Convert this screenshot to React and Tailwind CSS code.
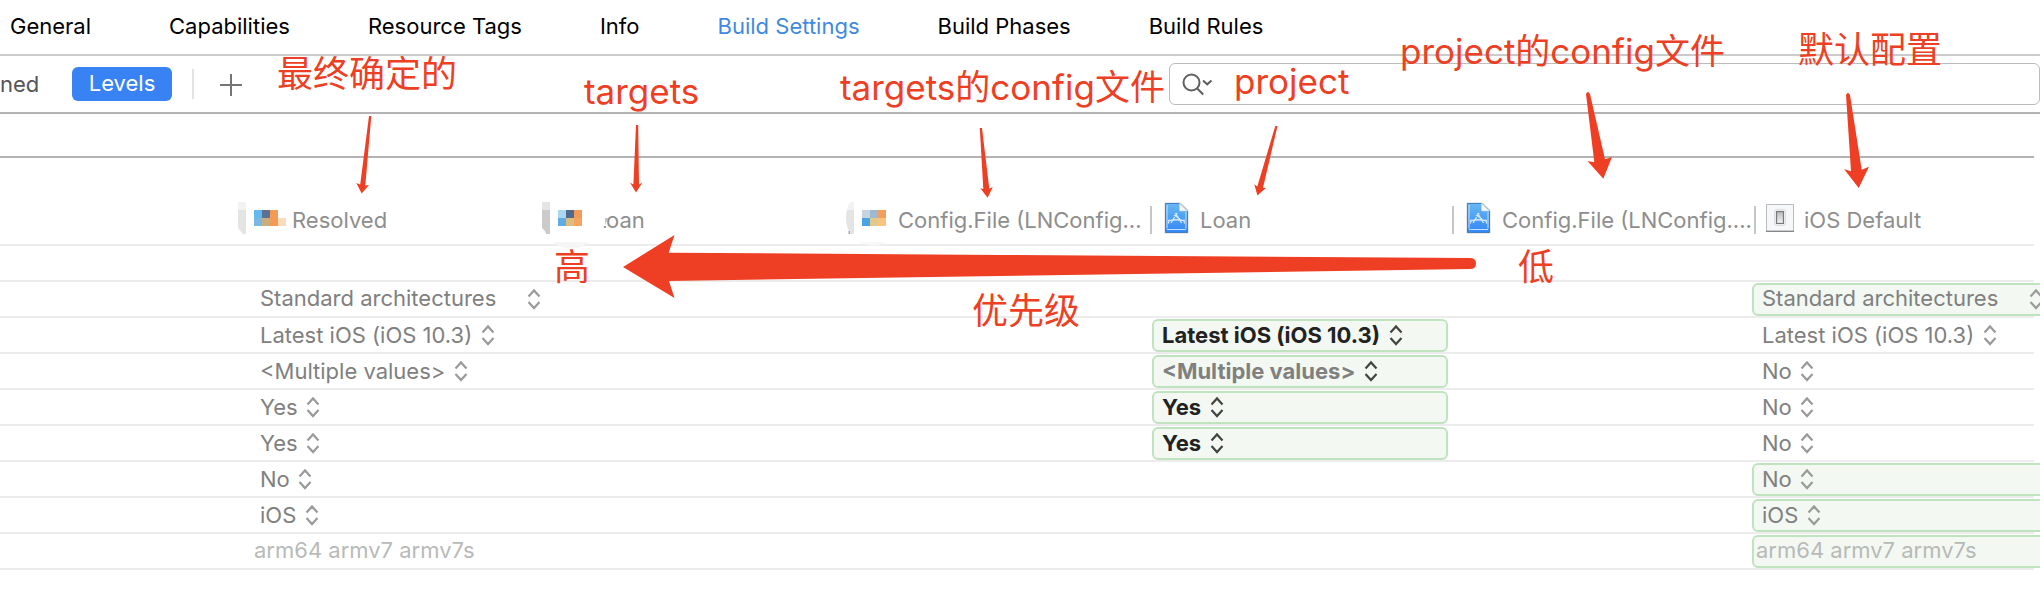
const TABS = ["General", "Capabilities", "Resource Tags", "Info", "Build Settings", "Build Phases", "Build Rules"];

function Stepper({ className }) {
  return (
    <svg viewBox="0 0 14 22" className={"h-[22px] w-[14px] shrink-0 " + className} fill="none" stroke="currentColor" strokeWidth="2.2" aria-hidden="true">
      <path d="M1.500 8.500 7 2.500l5.500 6M1.500 14l5.500 6 5.500-6" />
    </svg>
  );
}

function Mosaic({ kind }) {
  if (kind === "resolved") {
    return (
      <svg width="54" height="32" viewBox="0 0 54 32" className="shrink-0" aria-hidden="true">
        <path d="M0 0h8v8H0z" fill="#f2f2f2" />
        <path d="M0 8h8v24H5l-5-6z" fill="#e4e4e4" />
        <path d="M16 8h8v8h-8z" fill="#64b9ee" />
        <path d="M24 8h8v8h-8z" fill="#5b7093" />
        <path d="M32 8h8v16h-8z" fill="#f19b55" />
        <path d="M16 16h8v8h-8z" fill="#7cb7e4" />
        <path d="M24 16h8v8h-8z" fill="#c7ae7c" />
        <path d="M40 16h8v8h-8z" fill="#fadbbb" />
      </svg>
    );
  }
  if (kind === "target") {
    return (
      <svg width="64" height="32" viewBox="0 0 64 32" className="shrink-0 overflow-visible" aria-hidden="true">
        <path d="M0 0h8v8H0z" fill="#e4e4e4" />
        <path d="M0 8h8v24H4l-1-3-3-3z" fill="#cbcbcb" />
        <path d="M16 8h8v8h-8z" fill="#aad6f1" />
        <path d="M24 8h8v8h-8z" fill="#506a8e" />
        <path d="M32 8h8v8h-8z" fill="#f29a57" />
        <path d="M16 16h8v8h-8z" fill="#60ade2" />
        <path d="M24 16h8v8h-8z" fill="#dcbd7e" />
        <path d="M32 16h8v8h-8z" fill="#f4a45e" />
        <path d="M11 40q18 14 36 0z" fill="#f6f6f6" />
        <path d="M63 16h3l-3 7z" fill="#b8c4cf" />
        <path d="M62 24h2v2h-2z" fill="#999" />
      </svg>
    );
  }
  return (
    <svg width="52" height="32" viewBox="0 0 52 32" className="shrink-0 overflow-visible" aria-hidden="true">
      <path d="M8 0v8H1q1-6 4-8z" fill="#f2f2f2" />
      <path d="M8 8v24H4Q-2 20 1 8z" fill="#e4e4e4" />
      <path d="M2.500 29h1.500v3h-1.500z" fill="#aaa" />
      <path d="M16 8h8v8h-8z" fill="#c6d4e1" />
      <path d="M24 8h8v8h-8z" fill="#9fb7d0" />
      <path d="M32 8h8v8h-8z" fill="#f29f5e" />
      <path d="M16 16h8v8h-8z" fill="#4ba4e2" />
      <path d="M24 16h8v8h-8z" fill="#dfc98b" />
      <path d="M32 16h8v8h-8z" fill="#f8c47f" />
      <path d="M13 40q14 7 28 0z" fill="#f8f8f8" />
    </svg>
  );
}

function ProjectIcon() {
  return (
    <svg width="26" height="32" viewBox="0 0 26 32" className="shrink-0" aria-hidden="true">
      <defs>
        <linearGradient id="doc" x1="0" y1="0" x2="0" y2="1">
          <stop offset="0" stopColor="#67b8f2" />
          <stop offset="1" stopColor="#3386f6" />
        </linearGradient>
      </defs>
      <path d="M.5.500h16L24.500 8v23.500H.5z" fill="#d5d5d5" />
      <path d="M1.500 1.500h14L23.500 9v21.500h-22z" fill="url(#doc)" stroke="#3f7fc4" />
      <path d="M15.500 1.500V9h8z" fill="#f4f6f8" stroke="#c9d2da" strokeWidth=".6" />
      <path d="M3 3v23.500M22 10v16.500M3 27.500h19" stroke="#c4e0fb" strokeWidth="1" fill="none" />
      <g stroke="#d3e9fd" strokeWidth="1.300" fill="none">
        <path d="m13 11-6 10M11.500 11l6 10M4.500 19q8-2.500 16 0M5 17.500l-.5 4M20 17.500l.5 4M10 13l6 4" />
      </g>
    </svg>
  );
}

function DefaultIcon() {
  return (
    <svg width="28" height="28" viewBox="0 0 28 28" className="shrink-0" aria-hidden="true">
      <defs>
        <linearGradient id="knob" x1="0" y1="0" x2="0" y2="1">
          <stop offset="0" stopColor="#b9babc" />
          <stop offset="1" stopColor="#f5f5f6" />
        </linearGradient>
      </defs>
      <path d="M.5.500h27v27H.5z" fill="#f6f7f9" stroke="#b9bbbe" />
      <path d="M0 27.300h28" stroke="#85878a" strokeWidth="1.400" />
      <rect x="8.500" y="5.500" width="11" height="16" rx="2" fill="#fff" stroke="#dcdddf" />
      <rect x="10.500" y="7.500" width="7" height="12" fill="url(#knob)" stroke="#77797b" strokeWidth="1.300" />
    </svg>
  );
}

const COLUMNS = [
  { name: "Resolved", mosaic: "resolved" },
  { name: "oan", mosaic: "target" },
  { name: "Config.File (LNConfig...", mosaic: "config" },
  { name: "Loan", icon: "project" },
  { name: "Config.File (LNConfig....", icon: "project" },
  { name: "iOS Default", icon: "default" },
];

const ROWS = [
  { resolved: "Standard architectures", def: "Standard architectures", wide: true, defBox: true },
  { resolved: "Latest iOS (iOS 10.3)", project: "Latest iOS (iOS 10.3)", def: "Latest iOS (iOS 10.3)" },
  { resolved: "<Multiple values>", project: "<Multiple values>", dim: true, def: "No" },
  { resolved: "Yes", project: "Yes", def: "No" },
  { resolved: "Yes", project: "Yes", def: "No" },
  { resolved: "No", def: "No", defBox: true },
  { resolved: "iOS", def: "iOS", defBox: true },
  { resolved: "arm64 armv7 armv7s", def: "arm64 armv7 armv7s", plain: true, defBox: true },
];

function Value({ value, label, boxed, bold, dim, wide, plain, className = "" }) {
  const frame = boxed ? "border-[#bfe2bf] bg-[#f3f8f2]" : "border-transparent";
  const tone = bold ? (dim ? "font-bold text-[#808080]" : "font-bold text-[#222]") : "text-[#808080]";
  return (
    <div className={"mt-px flex h-[33px] items-center rounded-md border-2 pb-0.5 " + frame + " " + className}>
      {plain ? (
        <span className="whitespace-nowrap pb-0.5 pl-[2px] text-[#b8bab8]">{value}</span>
      ) : (
        <label className={"flex shrink-0 items-center pl-2 " + (wide ? "gap-[30px]" : "gap-2")}>
          <select aria-label={label} className={"appearance-none bg-transparent p-0 leading-7 outline-none " + tone + (wide ? " pb-0.5" : "")}>
            <option>{value}</option>
          </select>
          <Stepper className={bold ? "text-[#444]" : "text-[#9a9a9a]"} />
        </label>
      )}
    </div>
  );
}

const NOTES = [
  { text: "最终确定的", at: "left-[277px] top-[56px] text-[36px]" },
  { text: "targets", at: "left-[584px] top-[73px] text-[35px]" },
  { text: "targets的config文件", at: "left-[840px] top-[69px] text-[35px]" },
  { text: "project", at: "left-[1234px] top-[63px] text-[35px]" },
  { text: "project的config文件", at: "left-[1400px] top-[33px] text-[35px]" },
  { text: "默认配置", at: "left-[1798px] top-[32px] text-[36px]" },
  { text: "高", at: "left-[554px] top-[249px] text-[36px]" },
  { text: "低", at: "left-[1518px] top-[249px] text-[36px]" },
  { text: "优先级", at: "left-[972px] top-[293px] text-[36px]" },
];

function Annotations() {
  return (
    <div className="pointer-events-none absolute inset-0 font-['Inter','Noto_Sans_CJK_SC',sans-serif] text-[#ee3f24]">
      <svg width="2040" height="600" viewBox="0 0 2040 600" className="absolute left-0 top-0 max-w-none" fill="#ee3f24" aria-hidden="true">
        <path d="M369 116h2.300L365.300 185.500l3.700-.5-7.300 8.500L356.300 183l3.900 1.500z" />
        <path d="M636 125h2.200l.8 59.500 3.400-2-6.400 10-6-10 3.400 2z" />
        <path d="M979.800 128h2.200l7.300 60.700 3.500-1.700-5.200 10.700-7.300-9.400 3 .7z" />
        <path d="M1275.300 126h2.200L1263 187.700l3 .3-8.600 7.500-3.100-11.200 3 2.200z" />
        <path d="M1586 94q2-4 4 0l15 65.300 7-2.300-8.700 21.700L1587.500 161l6.800 1.300z" />
        <path d="M1846 95q2-4 4 0l11.700 74.700 7.300-3-10.300 21.300L1844 169l7 2.300z" />
        <path d="M623 267 674.500 235l-5.800 17.700L1000 255l470 3q6 0 6 5.500t-6 5.500l-470 7-331 5 5.500 17z" />
      </svg>
      {NOTES.map((n) => (
        <span key={n.text} className={"absolute whitespace-nowrap leading-[36px] " + n.at}>{n.text}</span>
      ))}
    </div>
  );
}

export default function App() {
  return (
    <div className="relative min-h-screen overflow-hidden bg-white font-['Inter','Noto_Sans_CJK_SC',sans-serif] text-[22px] leading-7 text-black">
      <nav className="flex h-14 items-center gap-[78px] border-b-2 border-[#cbcbcb] pb-0.5 pl-[10px]">
        {TABS.map((t) => (
          <a key={t} href="#" className={"whitespace-nowrap " + (t === "Build Settings" ? "text-[#3f8ae0]" : "")}>{t}</a>
        ))}
      </nav>

      <div className="flex h-[58px] items-center border-b-2 border-[#b3b3b3]">
        <button className="w-9 shrink-0 text-left text-[#555]">ned</button>
        <button className="ml-9 h-[34px] w-[100px] shrink-0 rounded-md bg-[#3882f4] pb-0.5 text-white">Levels</button>
        <div className="ml-5 h-[30px] w-0.5 shrink-0 bg-[#e2e2e2]" />
        <button aria-label="Add" className="ml-[26px] shrink-0 text-[#757575]">
          <svg width="22" height="22" viewBox="0 0 22 22" stroke="currentColor" strokeWidth="2" className="mt-0.5"><path d="M11 0v22M0 11h22" /></svg>
        </button>
        <label className="ml-auto flex h-[42px] w-[871px] items-center rounded-md border border-[#bcbcbc] pl-3">
          <svg width="32" height="24" viewBox="0 0 32 24" fill="none" stroke="#5f5f5f" strokeWidth="2" aria-hidden="true">
            <circle cx="9.500" cy="10.500" r="8" />
            <path d="m15.200 16.500 6 6M21 8.500l4.200 3.800L29.500 8.500" />
          </svg>
          <input aria-label="Search" className="min-w-0 flex-1 bg-transparent pl-3 outline-none" />
        </label>
      </div>

      <div className="mr-1.5 h-11 border-b-2 border-[#b3b3b3]" />

      <div className="mr-1.5">
        <table className="w-full table-fixed border-separate border-spacing-0">
          <colgroup>
            <col className="w-[238px]" />
            <col className="w-[304px]" />
            <col className="w-[304px]" />
            <col className="w-[304px]" />
            <col className="w-[302px]" />
            <col className="w-[302px]" />
            <col />
          </colgroup>
          <thead>
            <tr>
              <td className="h-[88px] border-b-2 border-[#ececec] p-0" />
              {COLUMNS.map((c, i) => (
                <th key={i} scope="col" className="border-b-2 border-[#ececec] p-0 pb-[10px] text-left align-bottom font-normal text-[#8e8e8e]">
                  {c.mosaic ? (
                    <div className="flex h-8 items-end whitespace-nowrap">
                      <Mosaic kind={c.mosaic} />
                      {c.name}
                    </div>
                  ) : (
                    <div className="flex h-8 items-end whitespace-nowrap">
                      <span className="h-7 w-0.5 shrink-0 bg-[#c6c6c6]" />
                      <span className={"flex h-8 w-12 shrink-0 " + (c.icon === "project" ? "items-start pl-3" : "items-center pl-2.5")}>
                        {c.icon === "project" ? <ProjectIcon /> : <DefaultIcon />}
                      </span>
                      {c.name}
                    </div>
                  )}
                </th>
              ))}
            </tr>
          </thead>
          <tbody>
            <tr>
              <td colSpan={7} className="h-9 border-b-2 border-[#ececec] p-0" />
            </tr>
            {ROWS.map((r, i) => (
              <tr key={i} className="[&>td]:h-9 [&>td]:border-b-2 [&>td]:border-[#ececec] [&>td]:p-0 [&>td]:align-top">
                <td />
                <td>
                  <Value value={r.resolved} label="Resolved value" wide={r.wide} plain={r.plain} className="ml-3" />
                </td>
                <td />
                <td />
                <td>
                  {r.project && <Value value={r.project} label="Project value" boxed bold dim={r.dim} className="ml-0.5 mr-1" />}
                </td>
                <td />
                <td>
                  <Value value={r.def} label="Default value" boxed={r.defBox} wide={r.wide} plain={r.plain} className="-ml-0.5 -mr-4" />
                </td>
              </tr>
            ))}
          </tbody>
        </table>
      </div>

      <Annotations />
    </div>
  );
}
